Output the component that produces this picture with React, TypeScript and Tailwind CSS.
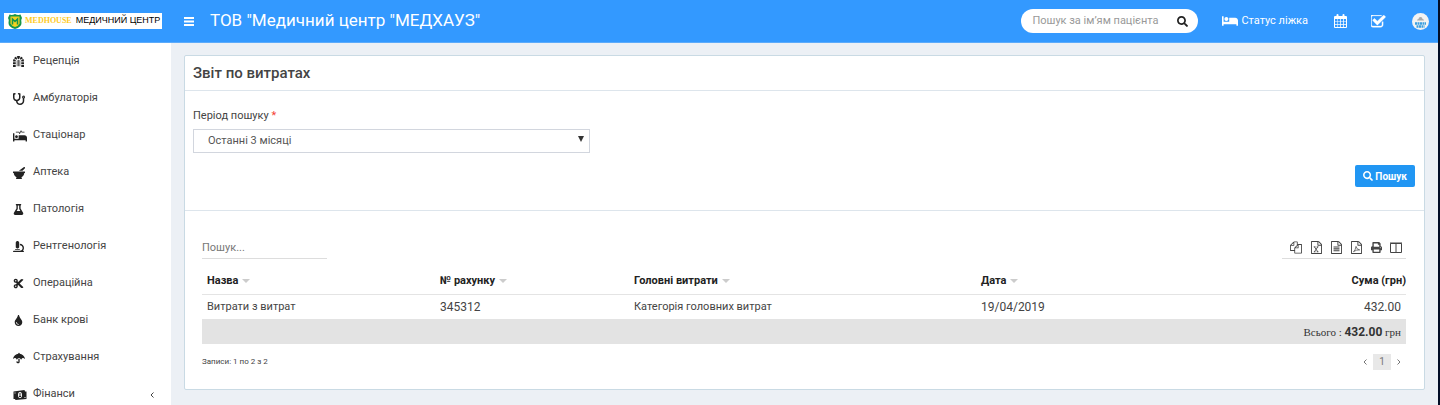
import type { ReactNode } from "react";
import { clsx } from "clsx";
import {
  FaBed,
  FaCut,
  FaDungeon,
  FaFlask,
  FaMicroscope,
  FaMortarPestle,
  FaPrint,
  FaProcedures,
  FaSearch,
  FaStethoscope,
  FaTint,
  FaUmbrella,
} from "react-icons/fa";

interface MenuItem {
  label: string;
  icon: ReactNode;
  hasChildren?: boolean;
}

interface Expense {
  name: string;
  invoice: string;
  head: string;
  date: string;
  amount: string;
}

function MenuIcon() {
  return (
    <svg viewBox="0 0 10 9" className="h-[9px] w-[10px]" fill="currentColor">
      <path d="M0 0h10v2H0zM0 3.500h10v2H0zM0 7h10v2H0z" />
    </svg>
  );
}

function MoneyIcon() {
  return (
    <svg viewBox="0 0 28 20" className="h-[10px] w-[14px]" fill="currentColor">
      <path d="M1 3 L23 0 L24 3 L27 3 L27 18 L5 20 L4 18 L1 18 Z" />
      <ellipse cx="14" cy="10" rx="4" ry="6" fill="#fff" />
      <path d="M13 6h2v6h1v2h-4v-2h1z" />
      <path d="M3 5h2v2H3zM23 14h2v2h-2z" fill="#fff" />
    </svg>
  );
}

function CalendarIcon() {
  return (
    <svg viewBox="0 0 26 28" className="h-[14px] w-[13px]" fill="currentColor">
      <path
        fillRule="evenodd"
        d="M2 4h3V2a2 2 0 0 1 4 0v2h8V2a2 2 0 0 1 4 0v2h3a2 2 0 0 1 2 2v20a2 2 0 0 1-2 2H2a2 2 0 0 1-2-2V6a2 2 0 0 1 2-2zM2 10h4.500v4.500H2zM7.500 10H12v4.500H7.500zM13.500 10H18v4.500h-4.500zM19.500 10H24v4.500h-4.500zM2 15.700h4.500v4.500H2zM7.500 15.700H12v4.500H7.500zM13.500 15.700H18v4.500h-4.500zM19.500 15.700H24v4.500h-4.500zM2 21.500h4.500V26H2zM7.500 21.500H12V26H7.500zM13.500 21.500H18V26h-4.500zM19.500 21.500H24V26h-4.500z"
      />
    </svg>
  );
}

function TaskIcon() {
  return (
    <svg viewBox="128 192 1664 1408" className="h-[13px] w-[15px]" fill="currentColor">
      <path
        stroke="currentColor"
        strokeWidth="40"
        d="M1472 930v318q0 119-84.500 203.500t-203.500 84.500h-832q-119 0-203.500-84.500t-84.500-203.500v-832q0-119 84.500-203.500t203.500-84.500h832q63 0 117 25 15 7 18 23 3 17-9 29l-49 49q-10 10-23 10-3 0-9-2-23-6-45-6h-832q-66 0-113 47t-47 113v832q0 66 47 113t113 47h832q66 0 113-47t47-113v-254q0-13 9-22l64-64q10-10 23-10 6 0 12 3 20 8 20 29zm231-489l-814 814q-24 24-57 24t-57-24l-430-430q-24-24-24-57t24-57l110-110q24-24 57-24t57 24l263 263 647-647q24-24 57-24t57 24l110 110q24 24 24 57t-24 57z"
      />
    </svg>
  );
}

function CopyIcon() {
  return (
    <svg viewBox="0 0 1792 1792" className="size-[13px]" fill="currentColor">
      <path d="M1696 384q40 0 68 28t28 68v1216q0 40-28 68t-68 28h-960q-40 0-68-28t-28-68v-288h-544q-40 0-68-28t-28-68v-672q0-40 20-88t48-76l408-408q28-28 76-48t88-20h416q40 0 68 28t28 68v328q68-40 128-40h416zm-544 213l-299 299h299v-299zm-640-384l-299 299h299v-299zm196 647l316-316v-416h-384v416q0 40-28 68t-68 28h-416v640h512v-256q0-40 20-88t48-76zm956 804v-1152h-384v416q0 40-28 68t-68 28h-416v640h896z" />
    </svg>
  );
}

// Outlined sheet with a folded corner, the mark on it comes in as children
function SheetIcon({ children }: { children: ReactNode }) {
  return (
    <svg viewBox="128 0 1536 1792" className="h-[13px] w-[11px]" fill="currentColor">
      <path d="M1596 380q28 28 48 76t20 88v1152q0 40-28 68t-68 28h-1344q-40 0-68-28t-28-68v-1600q0-40 28-68t68-28h896q40 0 88 20t76 48zm-444-244v376h376q-10-29-22-41l-313-313q-12-12-41-22zm384 1528v-1024h-416q-40 0-68-28t-28-68v-416h-768v1536h1280z" />
      {children}
    </svg>
  );
}

const menuItems: MenuItem[] = [
  { label: "Рецепція", icon: <FaDungeon size={11} /> },
  { label: "Амбулаторія", icon: <FaStethoscope size={12} /> },
  { label: "Стаціонар", icon: <FaProcedures size={14} /> },
  { label: "Аптека", icon: <FaMortarPestle size={12} /> },
  { label: "Патологія", icon: <FaFlask size={11} /> },
  { label: "Рентгенологія", icon: <FaMicroscope size={11} /> },
  { label: "Операційна", icon: <FaCut size={11} /> },
  { label: "Банк крові", icon: <FaTint size={11} /> },
  { label: "Страхування", icon: <FaUmbrella size={12} /> },
  { label: "Фінанси", icon: <MoneyIcon />, hasChildren: true },
];

const exportActions: { label: string; icon: ReactNode }[] = [
  { label: "Копіювати", icon: <CopyIcon /> },
  {
    label: "Excel",
    icon: (
      <SheetIcon>
        <path d="M600 800L1080 1500M1080 800L600 1500M520 800h240M920 800h240M520 1500h240M920 1500h240" stroke="currentColor" strokeWidth="120" />
      </SheetIcon>
    ),
  },
  {
    label: "CSV",
    icon: (
      <SheetIcon>
        <path d="M480 832h832M480 1088h832M480 1344h832" stroke="currentColor" strokeWidth="140" />
      </SheetIcon>
    ),
  },
  {
    label: "PDF",
    icon: (
      <SheetIcon>
        <path d="M480 1480Q740 1300 830 740Q900 1180 1340 1230Q900 1180 480 1480" fill="none" stroke="currentColor" strokeWidth="100" />
      </SheetIcon>
    ),
  },
  { label: "Друк", icon: <FaPrint size={11} /> },
  {
    label: "Стовпці",
    icon: (
      <svg viewBox="0 0 12 11" className="h-[11px] w-[12px]" fill="none" stroke="currentColor">
        <path d="M.5 1.500h11v9H.5zM6 1v9.500M0 1h12" />
      </svg>
    ),
  },
];

const columns = [
  { title: "Назва", width: "w-[233px]" },
  { title: "№ рахунку", width: "w-[194px]" },
  { title: "Головні витрати", width: "w-[347px]" },
  { title: "Дата", width: "w-[216px]" },
];

const expenses: Expense[] = [
  {
    name: "Витрати з витрат",
    invoice: "345312",
    head: "Категорія головних витрат",
    date: "19/04/2019",
    amount: "432.00",
  },
];

function Logo() {
  return (
    <a href="#" className="flex h-4 w-[158px] items-center bg-white pl-1 whitespace-nowrap">
      <svg viewBox="0 0 28 30" className="h-[15px] w-[14px] shrink-0">
        <path d="M3 1Q8 3 14 0Q20 3 25 1L28 8Q25 12 27 18Q27 26 14 30Q1 26 1 18Q3 12 0 8Z" fill="#16964a" />
        <path d="M5 5h18v14q-2 5-9 7q-7-2-9-7z" fill="#f5d21f" />
        <path d="M9 21V10l5 5 5-5v11" fill="none" stroke="#16964a" strokeWidth="3" />
      </svg>
      <span className="ml-[3px] font-['Liberation_Serif',serif] text-[8px] font-bold text-[#ffcb1f]">MEDHOUSE</span>
      <span className="ml-1 font-['Liberation_Sans',sans-serif] text-[9px] text-black">МЕДИЧНИЙ ЦЕНТР</span>
    </a>
  );
}

function TopBar() {
  return (
    <header className="flex h-[43px] shrink-0 items-center border-b border-[#5cabfb] bg-[#3399ff] pr-[9px] pl-1 text-white">
      <Logo />
      <button type="button" aria-label="Меню" className="ml-[22px]">
        <MenuIcon />
      </button>
      <span className="ml-4 text-[17px] whitespace-nowrap">ТОВ "Медичний центр "МЕДХАУЗ"</span>

      <div className="ml-auto flex items-center">
        <form className="flex h-6 w-[177px] items-center rounded-full bg-white pr-[10px] pl-[11px]">
          <input
            type="text"
            aria-label="Пошук за ім’ям пацієнта"
            placeholder="Пошук за ім’ям пацієнта"
            className="min-w-0 flex-1 text-[11px] text-gray-700 outline-none placeholder:text-[#999]"
          />
          <button type="submit" aria-label="Знайти" className="text-[#222]">
            <FaSearch size={11} />
          </button>
        </form>
        <a href="#" className="ml-6 flex items-center gap-[3px] text-[11px] whitespace-nowrap">
          <FaBed size={16} />
          Статус ліжка
        </a>
        <a href="#" aria-label="Календар" className="ml-[26px]">
          <CalendarIcon />
        </a>
        <a href="#" aria-label="Завдання" className="ml-6">
          <TaskIcon />
        </a>
        <a href="#" aria-label="Профіль" className="ml-[26px]">
          <svg viewBox="0 0 34 34" className="size-[17px]">
            <circle cx="17" cy="17" r="17" fill="#f3f3f3" />
            <path d="M10 15q0-3 3-3q0-4 4-4t4 4q3 0 3 3z" fill="#aaa" />
            <path d="M6 21h22M9 27h16" stroke="#3b9fe0" strokeWidth="5" strokeDasharray="4 1" />
          </svg>
        </a>
      </div>
    </header>
  );
}

function Sidebar() {
  return (
    <nav className="w-[171px] shrink-0 bg-white">
      <ul>
        {menuItems.map((item) => (
          <li key={item.label}>
            <a href="#" className="flex h-[37px] items-center pr-[17px] pl-[13px] text-[11px] text-[#444]">
              <span className="w-5 text-[#222]">{item.icon}</span>
              {item.label}
              {item.hasChildren && (
                <svg viewBox="0 0 4 6" className="ml-auto h-[6px] w-1" fill="none" stroke="currentColor">
                  <path d="M3.500 .5L1 3l2.500 2.500" />
                </svg>
              )}
            </a>
          </li>
        ))}
      </ul>
    </nav>
  );
}

function SearchForm() {
  return (
    <form className="border-b border-[#dde5ec] pt-4 pr-[9px] pb-[23px] pl-2">
      <div className="grid grid-cols-3 gap-[15px]">
        <div>
          <label htmlFor="period" className="block text-[11px] leading-[18px] text-[#444]">
            Період пошуку <span className="text-[#f44336]">*</span>
          </label>
          <div className="relative mt-[2px]">
            <select
              id="period"
              className="h-6 w-full appearance-none border border-[#d2d6de] bg-white px-[14px] text-[11px] text-[#555]"
            >
              <option>Останні 3 місяці</option>
            </select>
            <svg viewBox="0 0 6 6" className="pointer-events-none absolute top-[9px] right-[6px] size-[6px]" fill="#333">
              <path d="M0 0h6L3 6z" />
            </svg>
          </div>
        </div>
      </div>
      <div className="mt-3 flex justify-end">
        <button
          type="submit"
          className="flex h-[22px] items-center gap-[2px] rounded-xs bg-[#2196f3] px-2 text-[10px] font-bold text-white"
        >
          <FaSearch size={10} />
          Пошук
        </button>
      </div>
    </form>
  );
}

function ExpenseTable() {
  return (
    <table className="mt-[9px] w-full table-fixed text-left text-[11px] text-[#444]">
      <thead>
        <tr className="h-[26px] border-b border-[#e4e4e4] text-[#222]">
          {columns.map((column) => (
            <th key={column.title} className={clsx("px-[5px] font-bold", column.width)}>
              <span className="flex items-center gap-1">
                {column.title}
                <svg viewBox="0 0 8 4" className="h-1 w-2" fill="#ccc">
                  <path d="M0 0h8L4 4z" />
                </svg>
              </span>
            </th>
          ))}
          <th className="text-right font-bold">Сума (грн)</th>
        </tr>
      </thead>
      <tbody>
        {expenses.map((expense) => (
          <tr key={expense.invoice} className="h-[25px]">
            <td className="px-[5px]">{expense.name}</td>
            <td className="px-[5px] text-[12px]">{expense.invoice}</td>
            <td className="px-[5px]">{expense.head}</td>
            <td className="px-[5px] text-[12px]">{expense.date}</td>
            <td className="px-[5px] text-right text-[12px]">{expense.amount}</td>
          </tr>
        ))}
      </tbody>
      <tfoot>
        <tr className="h-[25px] bg-[#e3e3e3]">
          <td colSpan={5} className="px-[5px] text-right font-['Liberation_Serif',serif] text-[11px] text-[#333]">
            Всього : <b className="font-[Roboto,sans-serif] text-[12px] font-bold">432.00</b> грн
          </td>
        </tr>
      </tfoot>
    </table>
  );
}

export default function App() {
  return (
    <div className="flex h-screen flex-col overflow-hidden border-r-2 border-[#020d26] bg-[#ecf0f5] font-[Roboto,sans-serif]">
      <TopBar />
      <div className="flex min-h-0 flex-1">
        <Sidebar />
        <main className="min-w-0 flex-1 px-[13px] pt-3">
          <section className="rounded-xs border border-[#c9dae4] bg-white">
            <h1 className="border-b border-[#dde5ec] px-2 py-2 text-[15px] leading-[18px] font-medium text-[#444]">
              Звіт по витратах
            </h1>
            <SearchForm />

            <div className="pt-[26px] pr-[18px] pb-[19px] pl-[17px]">
              <div className="flex items-end justify-between">
                <input
                  type="search"
                  aria-label="Пошук у таблиці"
                  placeholder="Пошук..."
                  className="h-[22px] w-[125px] border-b border-[#ddd] text-[11px] outline-none placeholder:text-[#777]"
                />
                <div className="flex h-[22px] items-start gap-2 border-b border-[#ddd] pt-[3px] pr-1 pl-2 text-[#444]">
                  {exportActions.map((action) => (
                    <button key={action.label} type="button" title={action.label} className="flex h-[14px] w-3 items-center justify-center">
                      {action.icon}
                    </button>
                  ))}
                </div>
              </div>

              <ExpenseTable />

              <div className="mt-[10px] flex items-center justify-between text-[#444]">
                <p className="text-[8px]">Записи: 1 по 2 з 2</p>
                <div className="flex items-center gap-[6px] pr-[5px] text-[10px] text-[#777]">
                  <button type="button" aria-label="Попередня сторінка">
                    <svg viewBox="0 0 4 6" className="h-[6px] w-1" fill="none" stroke="currentColor">
                      <path d="M3.500 .5L1 3l2.500 2.500" />
                    </svg>
                  </button>
                  <button type="button" className="h-4 w-[18px] bg-[#e8e8e8] leading-4">
                    1
                  </button>
                  <button type="button" aria-label="Наступна сторінка">
                    <svg viewBox="0 0 4 6" className="h-[6px] w-1" fill="none" stroke="currentColor">
                      <path d="M.5 .5L3 3L.5 5.500" />
                    </svg>
                  </button>
                </div>
              </div>
            </div>
          </section>
        </main>
      </div>
    </div>
  );
}
